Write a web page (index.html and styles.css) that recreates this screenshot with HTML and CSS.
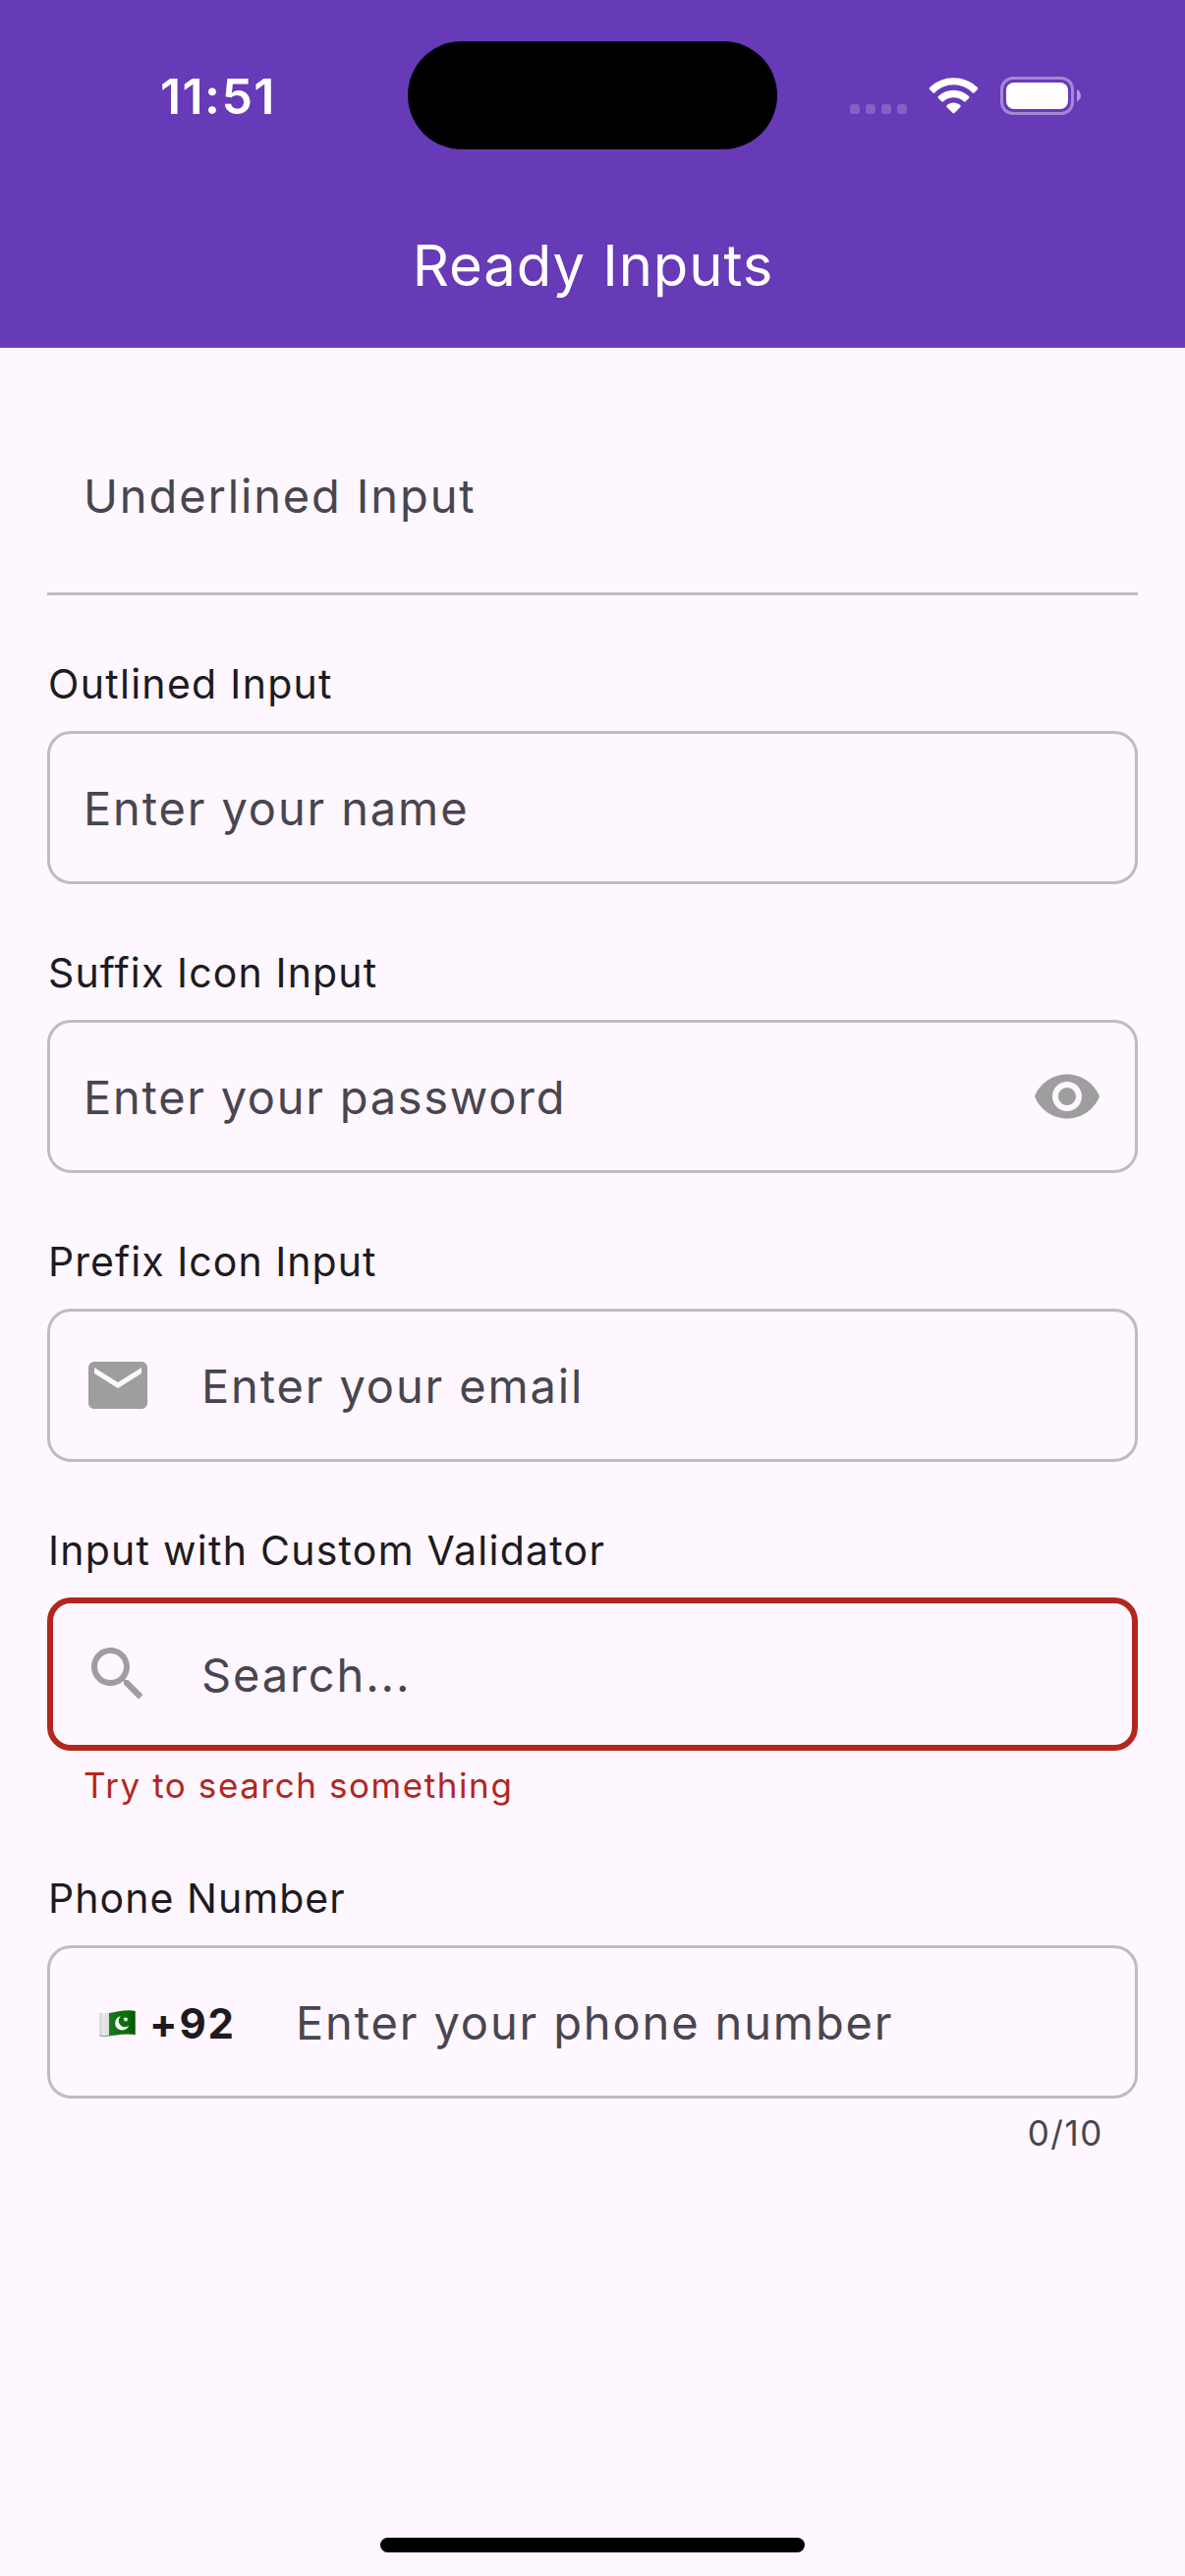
FILE: index.html
```html
<!DOCTYPE html>
<html lang="en">
<head>
<meta charset="utf-8">
<title>Ready Inputs</title>
<link rel="stylesheet" href="styles.css">
</head>
<body>
<div class="screen">
  <header class="header">
    <div class="status">
      <span class="time">11:51</span>
      <span class="island"></span>
      <div class="indicators">
        <span class="dots"><i></i><i></i><i></i><i></i></span>
        <svg class="wifi" viewBox="0 0 51 38" width="51" height="38">
          <path d="M1.1 10.1C14-3.2 37-3.2 49.9 10.1Q50.8 11 49.9 11.9L46.5 15.4Q45.6 16.2 44.7 15.4C34 4.6 17 4.6 6.3 15.4Q5.4 16.2 4.5 15.4L1.1 11.9Q.2 11 1.1 10.1Z"/>
          <path d="M9.9 19.1C18.5 10.6 32.5 10.6 41.1 19.1Q42 20 41.1 20.9L37.7 24.3Q36.8 25.1 35.9 24.3C30 19 21 19 15.1 24.3Q14.2 25.1 13.3 24.3L9.9 20.9Q9 20 9.9 19.1Z"/>
          <path d="M18.7 28.1C22.5 24.7 28.5 24.7 32.3 28.1Q33.3 29 32.4 29.9L26.4 36Q25.5 36.9 24.6 36L18.6 29.9Q17.7 29 18.7 28.1Z"/>
        </svg>
        <svg class="battery" viewBox="0 0 82 39" width="82" height="39">
          <rect class="faint-line" x="1.5" y="1.5" width="72" height="36" rx="11.5"/>
          <rect x="6" y="6" width="63" height="27" rx="8"/>
          <path class="faint" d="M78 13.2C83.3 15.5 83.3 23.2 78 25.5Z"/>
        </svg>
      </div>
    </div>
    <h1 class="title">Ready Inputs</h1>
  </header>

  <main class="form">
    <div class="underlined"><span class="hint">Underlined Input</span></div>

    <section class="field">
      <div class="label outlined">Outlined Input</div>
      <div class="box"><span class="hint">Enter your name</span></div>
    </section>

    <section class="field">
      <div class="label suffix">Suffix Icon Input</div>
      <div class="box">
        <span class="hint password">Enter your password</span>
        <svg class="icon" viewBox="0 0 24 24"><path d="M12 4.5C7 4.5 2.73 7.61 1 12c1.73 4.39 6 7.5 11 7.5s9.27-3.11 11-7.5c-1.73-4.39-6-7.5-11-7.5zM12 17c-2.76 0-5-2.24-5-5s2.24-5 5-5 5 2.24 5 5-2.24 5-5 5zm0-8c-1.66 0-3 1.34-3 3s1.34 3 3 3 3-1.34 3-3-1.34-3-3-3z"/></svg>
      </div>
    </section>

    <section class="field">
      <div class="label">Prefix Icon Input</div>
      <div class="box">
        <svg class="icon lead" viewBox="0 0 24 24"><path d="M20 4H4c-1.1 0-2 .9-2 2v12c0 1.1.9 2 2 2h16c1.1 0 2-.9 2-2V6c0-1.1-.9-2-2-2zm0 4l-8 5-8-5V6l8 5 8-5v2z"/></svg>
        <span class="hint">Enter your email</span>
      </div>
    </section>

    <section class="field">
      <div class="label validator">Input with Custom Validator</div>
      <div class="box invalid">
        <svg class="icon lead" viewBox="0 0 24 24"><path d="M15.5 14h-.79l-.28-.27C15.41 12.59 16 11.11 16 9.5 16 5.91 13.09 3 9.5 3S3 5.91 3 9.5 5.91 16 9.5 16c1.61 0 3.09-.59 4.23-1.57l.27.28v.79l5 4.99L20.49 19l-4.99-5zm-6 0C7.01 14 5 11.99 5 9.5S7.01 5 9.5 5 14 7.01 14 9.5 11.99 14 9.5 14z"/></svg>
        <span class="hint">Search...</span>
      </div>
      <div class="support error">Try to search something</div>
    </section>

    <section class="field">
      <div class="label">Phone Number</div>
      <div class="box">
        <div class="country">
          <svg class="flag" viewBox="0 0 37 27" width="37" height="27">
            <defs>
              <linearGradient id="cloth" x1="0" x2="1" y1="0" y2="0">
                <stop offset="0" stop-color="#1c7a1c"/><stop offset=".35" stop-color="#107010"/>
                <stop offset=".7" stop-color="#087008"/><stop offset="1" stop-color="#035203"/>
              </linearGradient>
              <linearGradient id="hoist" x1="0" x2="1" y1="0" y2="0">
                <stop offset="0" stop-color="#c9c9c9"/><stop offset=".3" stop-color="#e9e9e9"/>
                <stop offset="1" stop-color="#dcdcdc"/>
              </linearGradient>
            </defs>
            <path fill="url(#hoist)" d="M.5 2.6Q5 3.8 10.2 3V26Q5 27.3.5 26Z"/>
            <path fill="url(#cloth)" d="M10 3C18 2 27-1.1 36.7.9V25C27 23.2 19 25.2 10 26.1Z"/>
            <path fill="none" stroke="#55705a" stroke-width=".7" d="M.5 26Q5 27.1 10 26.1C19 25.2 27 23.2 36.7 25"/>
            <path fill="#fff" d="M21.9 6.2A7.2 7.2 0 1 0 30.1 15.7A6.2 6.2 0 1 1 21.9 6.2Z"/>
            <path fill="#fff" d="M26.6 6.7l1 1.6 1.9-.1-1.2 1.5.6 1.8-1.8-.7-1.5 1.1.1-1.9-1.5-1.2 1.8-.5z"/>
          </svg>
          <span class="code">+92</span>
        </div>
        <span class="hint">Enter your phone number</span>
      </div>
      <div class="support counter">0/10</div>
    </section>
  </main>

  <footer class="footer"><span class="home"></span></footer>
</div>
</body>
</html>
```
FILE: styles.css
```css
* { box-sizing: border-box; }

body {
  margin: 0;
  background: #fef7ff;
  font-family: Inter, "Liberation Sans", sans-serif;
  color: #1d1b20;
}

.screen {
  display: flex;
  flex-direction: column;
  width: 1206px;
  height: 2622px;
  overflow: hidden;
}

.header {
  height: 354px;
  background: #673ab7;
  color: #fff;
}

.status {
  display: flex;
  align-items: flex-start;
  height: 186px;
  padding-left: 163px;
}

.time {
  width: 252px;
  margin-top: 68px;
  font-size: 50px;
  font-weight: 600;
  line-height: 60px;
  letter-spacing: 1.4px;
}

.island {
  width: 376px;
  height: 110px;
  margin-top: 42px;
  border-radius: 55px;
  background: #000;
}

.indicators {
  display: flex;
  margin: 78px 0 0 74px;
}

.indicators svg { display: block; fill: #fff; }

.dots { display: flex; gap: 6px; margin-top: 28px; }

.dots i {
  width: 10px;
  height: 10px;
  border-radius: 3px;
  background: rgba(255, 255, 255, .2);
}

.wifi { margin: 1px 0 0 22px; }
.battery { margin-left: 22px; }
.indicators .faint { fill: rgba(255, 255, 255, .48); }
.indicators .faint-line { fill: none; stroke: rgba(255, 255, 255, .4); stroke-width: 3; }

.title {
  margin: 0;
  padding-left: 1px;
  font-size: 58px;
  font-weight: 400;
  line-height: 168px;
  letter-spacing: .9px;
  text-align: center;
}

.form {
  flex: 1;
  display: flex;
  flex-direction: column;
  gap: 60px;
  padding: 48px 48px 0;
}

.underlined {
  display: flex;
  align-items: center;
  height: 204px;
  padding: 2px 36px 0;
  border-bottom: 3px solid #bdbdbd;
}

.label {
  margin-bottom: 18px;
  padding-left: 1px;
  font-size: 41px;
  line-height: 60px;
  letter-spacing: 1.05px;
}

.label.outlined { letter-spacing: 1.3px; }
.label.suffix { letter-spacing: 1.14px; }
.label.validator { letter-spacing: 1.25px; }

.box {
  display: flex;
  align-items: center;
  height: 156px;
  padding: 0 33px;
  border: 3px solid #bdbdbd;
  border-radius: 24px;
}

.box.invalid {
  padding: 0 30px;
  border: 6px solid #b3261e;
}

.hint {
  flex: 1;
  padding: 2px 0 0 1px;
  font-size: 47px;
  line-height: 60px;
  letter-spacing: 1.87px;
  color: #49454f;
}

.hint.password { letter-spacing: 1.73px; }

.icon {
  width: 72px;
  height: 72px;
  fill: #9e9e9e;
}

.icon.lead { margin-right: 48px; }

.country {
  display: flex;
  align-items: center;
  gap: 14px;
  width: 216px;
  padding: 3px 0 0 17px;
}

.code {
  font-size: 42px;
  font-weight: 700;
  line-height: 50px;
  letter-spacing: 1.9px;
}

.support {
  margin-top: 11px;
  padding: 0 35px 0 37px;
  font-size: 35px;
  line-height: 49px;
  letter-spacing: 1.58px;
}

.error { color: #b3261e; }
.counter { color: #49454f; text-align: right; }

.footer {
  display: flex;
  justify-content: center;
  height: 39px;
}

.home {
  width: 432px;
  height: 15px;
  border-radius: 8px;
  background: #000;
}
```
